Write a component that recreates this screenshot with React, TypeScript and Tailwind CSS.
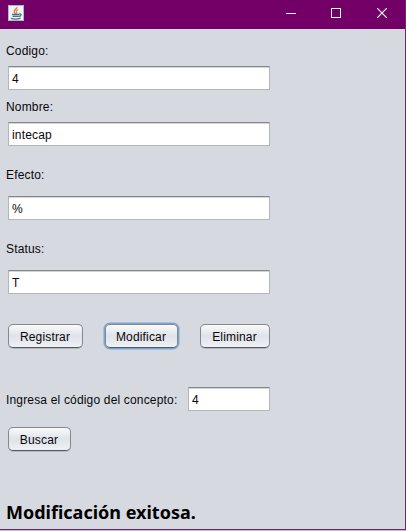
import type { ReactNode } from "react";

function JavaIcon() {
  return (
    <svg width="16" height="16" viewBox="0 0 16 16" className="ml-2 mt-[5px] shrink-0">
      <rect x="0.5" y="0.5" width="15" height="15" fill="#f1f4f6" stroke="#a9bac9" />
      <path d="M8.8 2.2C9.4 4.2 5 4.9 6.4 7.3 6.8 8 7.4 8.4 7.4 9.2" fill="none" stroke="#e0793c" strokeWidth="1.4" />
      <path d="M10.2 4.8C8 5.6 8 6.4 8.6 7.2 9 7.9 8.6 8.6 8 9" fill="none" stroke="#e08a50" strokeWidth="1.1" />
      <path d="M4 9.5H11M4.6 11.4H10.4M11 9.2C14 8.2 13.6 11 10.6 11.5M3 13.4C6 14.3 10 14.2 12.6 13.2" fill="none" stroke="#4f6f88" strokeWidth="1.3" />
    </svg>
  );
}

function TitleBar() {
  return (
    <header className="flex h-[29px] justify-between bg-[#720067]">
      <JavaIcon />
      <div className="flex">
        <div className="flex h-[26px] w-[45px] items-center justify-center">
          <svg width="10" height="10" viewBox="0 0 10 10" stroke="#fff" fill="none" shapeRendering="crispEdges">
            <path d="M0 5.5H10" />
          </svg>
        </div>
        <div className="flex h-[26px] w-[45px] items-center justify-center">
          <svg width="10" height="10" viewBox="0 0 10 10" stroke="#fff" fill="none" shapeRendering="crispEdges">
            <rect x="0.5" y="0.5" width="9" height="9" />
          </svg>
        </div>
        <div className="flex h-[26px] w-[47px] items-center justify-center">
          <svg width="10" height="10" viewBox="0 0 10 10" stroke="#fff" strokeWidth="1.2" fill="none">
            <path d="M0.2 0.2L9.8 9.8M9.8 0.2L0.2 9.8" />
          </svg>
        </div>
      </div>
    </header>
  );
}

function Label({ children, className = "" }: { children: ReactNode; className?: string }) {
  return <div className={`h-4 whitespace-nowrap pl-1.5 leading-4 ${className}`}>{children}</div>;
}

function Field({ value, className }: { value: string; className: string }) {
  return (
    <div
      className={`h-6 border border-[#b3b6bb] border-t-[#86888c] bg-white pl-[3px] pt-px leading-[22px] shadow-[inset_0_1px_0_#d3d4d6] ${className}`}
    >
      {value}
    </div>
  );
}

function Button({ children, className, focused = false }: { children: ReactNode; className: string; focused?: boolean }) {
  return (
    <button
      className={`h-6 rounded-[5px] border border-[#85888f] border-b-[#555962] bg-linear-to-b from-[#fafafc] via-[#dfe2e8] to-[#eff1f5] pt-0.5 pr-px pb-0 pl-0 text-center leading-5 ${
        focused ? "shadow-[0_0_0_1.5px_#78a5d1]" : "shadow-[0_1px_0_#b5b8c0]"
      } ${className}`}
    >
      {children}
    </button>
  );
}

export default function App() {
  return (
    <div className="h-[531px] w-[406px] overflow-hidden bg-[#c5bfc9] font-['Liberation_Sans',Arial,sans-serif] text-[12px] tracking-[0.17px] text-[#08080c]">
      <div className="h-[530px] border-r border-b border-[#71236b] bg-[#d6d9e0]">
        <TitleBar />
        <main className="flex flex-col">
          <Label className="mt-[14px]">Codigo:</Label>
          <Field value="4" className="ml-2 mt-[7px] w-[262px]" />
          <Label className="mt-[9px]">Nombre:</Label>
          <Field value="intecap" className="ml-2 mt-[7px] w-[262px]" />
          <Label className="mt-[21px]">Efecto:</Label>
          <Field value="%" className="ml-2 mt-[13px] w-[262px]" />
          <Label className="mt-[21px]">Status:</Label>
          <Field value="T" className="ml-2 mt-[13px] w-[262px]" />
          <div className="ml-2 mt-[30px] flex">
            <Button className="w-[75px]">Registrar</Button>
            <Button className="ml-[22px] w-[73px]" focused>Modificar</Button>
            <Button className="ml-[22px] w-[70px]">Eliminar</Button>
          </div>
          <div className="mt-[39px] flex items-end">
            <Label className="mb-[3px] w-[188px]">Ingresa el código del concepto:</Label>
            <Field value="4" className="w-[82px]" />
          </div>
          <Button className="ml-2 mt-4 w-[63px]">Buscar</Button>
          <div className="mt-[49px] pl-1.5 font-['Noto_Sans','Open_Sans',sans-serif] text-[18px] leading-6 font-bold tracking-normal whitespace-nowrap text-black">
            Modificación exitosa.
          </div>
        </main>
      </div>
    </div>
  );
}
